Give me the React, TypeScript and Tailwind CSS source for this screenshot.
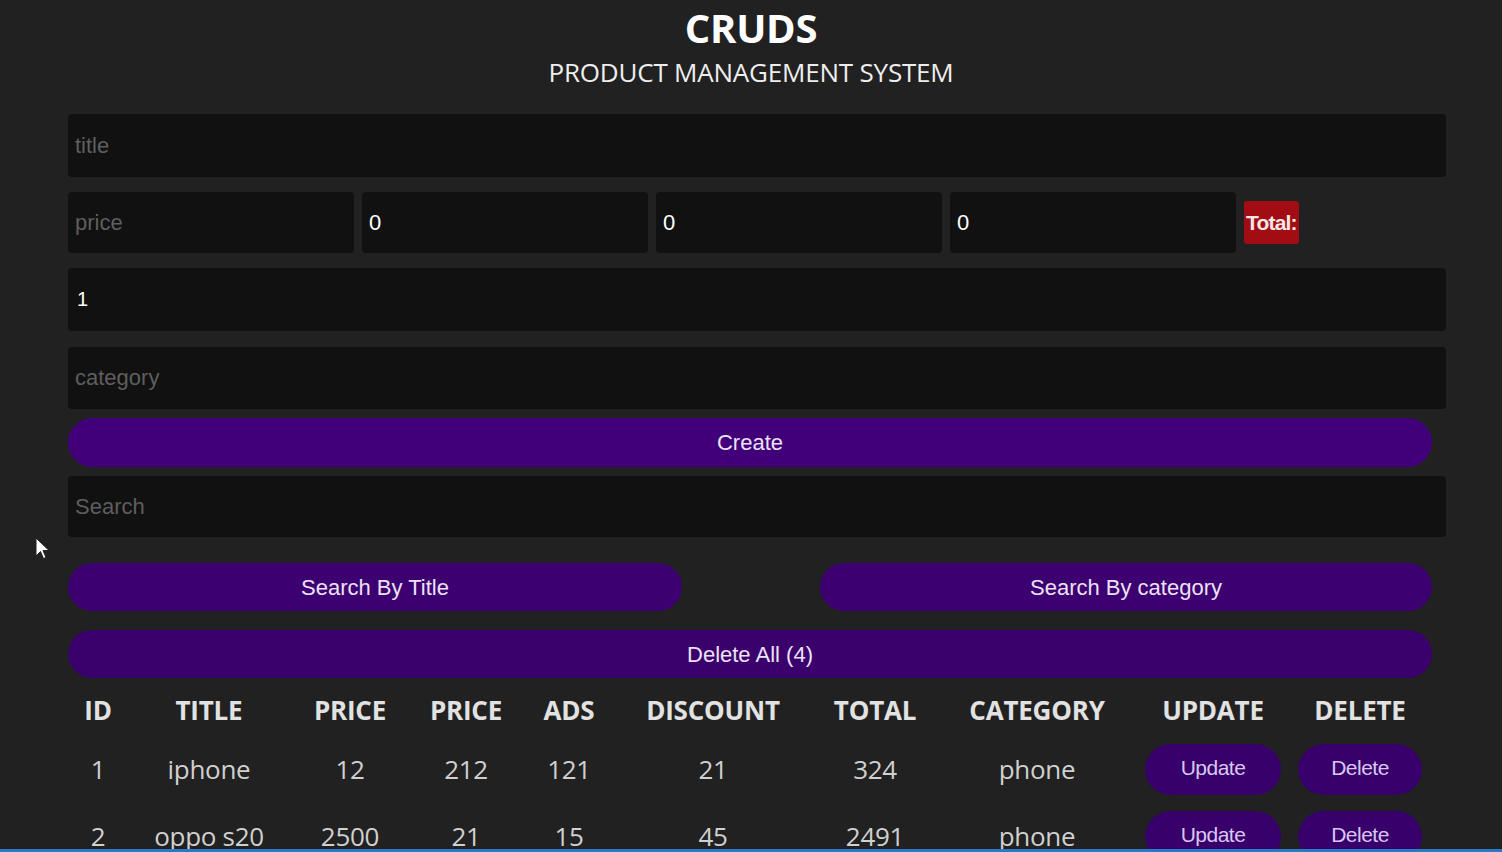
import React from "react";

const rows = [
  { id: 1, title: "iphone", price: 12, taxes: 212, ads: 121, discount: 21, total: 324, category: "phone" },
  { id: 2, title: "oppo s20", price: 2500, taxes: 21, ads: 15, discount: 45, total: 2491, category: "phone" },
];

const cols = "grid grid-cols-[60px_162px_120px_112px_94px_194px_130px_194px_158px_136px]";

export default function App() {
  return (
    <div className="relative h-[852px] w-full overflow-hidden bg-[#212121]">
      <div className="flex flex-col pl-[68px] pr-[56px]">
        <div className="flex flex-col items-center -ml-[68px] -mr-[56px] pt-[4px] text-white" style={{ fontFamily: '"Open Sans", "Noto Sans", sans-serif' }}>
          <h1 className="text-[40px] font-bold leading-[48px] tracking-[-0.3px]">CRUDS</h1>
          <p className="text-[26px] leading-[36px] text-[#eeeeee] tracking-[-0.2px] mt-[2px]">PRODUCT MANAGEMENT SYSTEM</p>
        </div>

        <div className="flex flex-col mt-[24px]" style={{ fontFamily: '"Liberation Sans", Arial, sans-serif' }}>
          <input
            placeholder="title"
            className="h-[63px] w-full rounded-[4px] bg-[#111111] px-[7px] text-[22px] text-white placeholder:text-[#5e5e5e] outline-none"
          />
          <div className="mt-[15px] flex items-center gap-[8px]">
            <input
              placeholder="price"
              className="h-[61px] w-[286px] rounded-[4px] bg-[#111111] px-[7px] text-[22px] text-white placeholder:text-[#5e5e5e] outline-none"
            />
            {["0", "0", "0"].map((v, i) => (
              <input
                key={i}
                defaultValue={v}
                className="h-[61px] w-[286px] rounded-[4px] bg-[#111111] px-[7px] text-[22px] text-white outline-none"
              />
            ))}
            <span className="rounded-[3px] bg-[#a10d12] px-[2px] py-[8px] text-[21px] leading-[27px] font-bold tracking-[-0.8px] text-[#f7e6e6]">
              Total:
            </span>
          </div>
          <input
            defaultValue="1"
            className="mt-[15px] h-[63px] w-full rounded-[4px] bg-[#111111] px-[9px] text-[20px] text-white outline-none"
          />
          <input
            placeholder="category"
            className="mt-[16px] h-[62px] w-full rounded-[4px] bg-[#111111] px-[7px] text-[22px] text-white placeholder:text-[#5e5e5e] outline-none"
          />
          <button className="mt-[9px] h-[49px] w-[1364px] rounded-full bg-[#41007a] text-[22px] text-[#ece2f7]">
            Create
          </button>
          <input
            placeholder="Search"
            className="mt-[9px] h-[61px] w-full rounded-[4px] bg-[#111111] px-[7px] text-[22px] text-white placeholder:text-[#5e5e5e] outline-none"
          />
          <div className="mt-[26px] flex w-[1364px] justify-between">
            <button className="h-[48px] w-[614px] rounded-full bg-[#3c0070] text-[22px] text-[#ece2f7]">
              Search By Title
            </button>
            <button className="h-[48px] w-[612px] rounded-full bg-[#3c0070] text-[22px] text-[#ece2f7]">
              Search By category
            </button>
          </div>
          <button className="mt-[19px] h-[48px] w-[1364px] rounded-full bg-[#3a006b] text-[22px] text-[#ece2f7]">
            Delete All (4)
          </button>
        </div>

        <div className="mt-[12px] flex flex-col" style={{ fontFamily: '"Open Sans", "Noto Sans", sans-serif' }}>
          <div className={`${cols} h-[40px] items-center text-center text-[26px] font-bold text-[#e2e2e2] tracking-[-0.2px]`}>
            <span>ID</span>
            <span>TITLE</span>
            <span>PRICE</span>
            <span>PRICE</span>
            <span>ADS</span>
            <span>DISCOUNT</span>
            <span>TOTAL</span>
            <span>CATEGORY</span>
            <span>UPDATE</span>
            <span>DELETE</span>
          </div>
          {rows.map((r) => (
            <div key={r.id} className={`${cols} mt-[12px] h-[55px] items-center text-center text-[26px] text-[#d0d0d0] tracking-[-0.3px]`}>
              <span>{r.id}</span>
              <span>{r.title}</span>
              <span>{r.price}</span>
              <span>{r.taxes}</span>
              <span>{r.ads}</span>
              <span>{r.discount}</span>
              <span>{r.total}</span>
              <span>{r.category}</span>
              <span className="flex justify-center">
                <button
                  className="h-[51px] w-[136px] rounded-full bg-[#37006a] pb-[4px] text-[21px] text-[#d9c7f0] tracking-[-0.5px]"
                  style={{ fontFamily: '"Liberation Sans", Arial, sans-serif' }}
                >
                  Update
                </button>
              </span>
              <span className="flex justify-center">
                <button
                  className="h-[51px] w-[124px] rounded-full bg-[#37006a] pb-[4px] text-[21px] text-[#d9c7f0] tracking-[-0.5px]"
                  style={{ fontFamily: '"Liberation Sans", Arial, sans-serif' }}
                >
                  Delete
                </button>
              </span>
            </div>
          ))}
        </div>
      </div>

      <svg className="absolute left-[34px] top-[536px]" width="18" height="26" viewBox="0 0 18 26">
        <path d="M2 2 L2 20 L6.5 15.5 L9.5 22.5 L12 21.5 L9 14.5 L15 14.5 Z" fill="#ffffff" stroke="#222" strokeWidth="1" />
      </svg>
      <div className="absolute bottom-0 left-0 h-[3px] w-full bg-[#2a78c8]" />
    </div>
  );
}
